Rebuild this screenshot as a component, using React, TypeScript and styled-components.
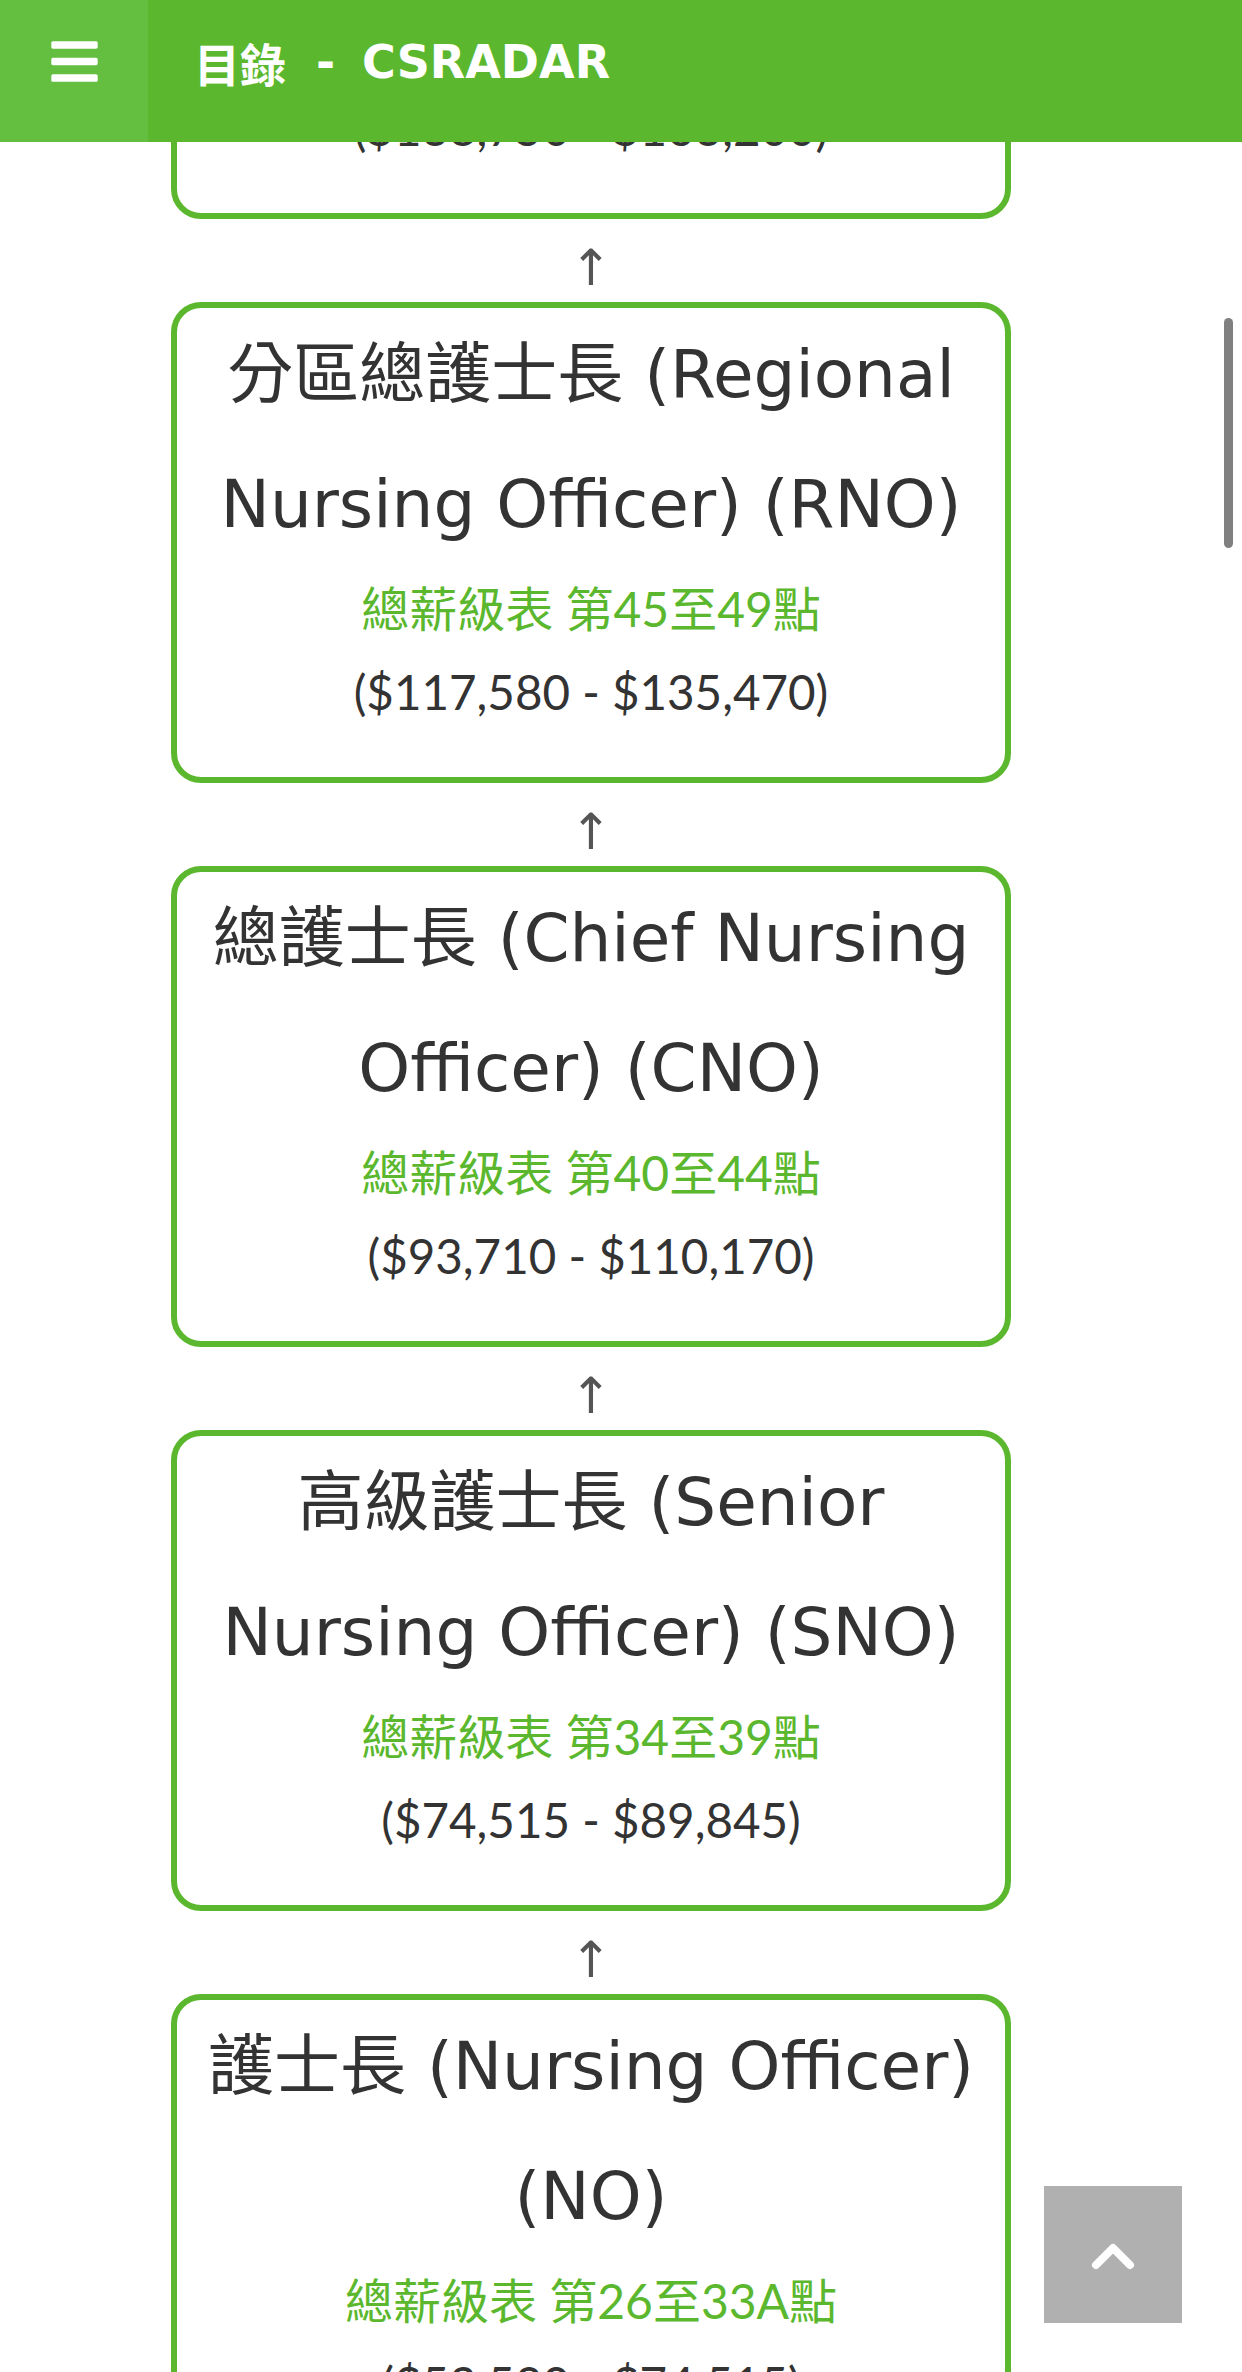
import React from "react";
import styled, { createGlobalStyle } from "styled-components";
import { FaBars } from "react-icons/fa";

const GREEN = "#5bb82e";

const GlobalStyle = createGlobalStyle`
  html, body {
    margin: 0;
    padding: 0;
    background: #ffffff;
  }
  body {
    font-family: "DejaVu Sans", "Noto Sans CJK TC", sans-serif;
    color: #333333;
  }
`;

const TopBar = styled.header`
  position: fixed;
  top: 0;
  left: 0;
  right: 0;
  height: 142px;
  display: flex;
  background: ${GREEN};
  z-index: 10;
`;

const MenuButton = styled.button`
  width: 148px;
  border: 0;
  padding: 0 0 20px;
  display: flex;
  align-items: center;
  justify-content: center;
  background: #64be3f;
  color: #ffffff;
`;

const BarTitle = styled.h1`
  margin: 0 0 0 46px;
  padding-bottom: 18px;
  display: flex;
  align-items: center;
  color: #ffffff;
  font-family: "DejaVu Sans", "Noto Sans CJK TC", sans-serif;
  font-size: 46px;
  font-weight: 700;
`;

const Dash = styled.span`
  margin: 0 27px 0 30px;
`;

const Page = styled.main`
  padding-right: 60px;
  display: flex;
  flex-direction: column;
  align-items: center;
  margin-top: -262px;
`;

const Card = styled.section`
  width: 840px;
  box-sizing: border-box;
  border: 6px solid ${GREEN};
  border-radius: 30px;
  padding: 2px 24px 49px;
  text-align: center;
`;

const RankTitle = styled.h2`
  margin: 0;
  font-family: "DejaVu Sans", "Noto Sans CJK TC", sans-serif;
  font-size: 66px;
  font-weight: 400;
  line-height: 130px;
  color: #333333;
`;

const Scale = styled.p`
  margin: 3px 0 0;
  font-family: Lato, "Noto Sans CJK TC", sans-serif;
  font-size: 48px;
  line-height: 72px;
  color: ${GREEN};
`;

const Salary = styled.p`
  margin: 11px 0 0;
  font-family: Lato, "Noto Sans CJK TC", sans-serif;
  font-size: 47.5px;
  line-height: 72px;
  color: #333333;
`;

const UpArrow = styled.div`
  height: 83px;
  display: flex;
  align-items: center;
  justify-content: center;
  padding-top: 14px;
  box-sizing: border-box;
  font-family: "DejaVu Sans", sans-serif;
  font-size: 50px;
  color: #555555;
`;

const ScrollThumb = styled.div`
  position: fixed;
  top: 318px;
  right: 9px;
  width: 9px;
  height: 230px;
  border-radius: 5px;
  background: #808080;
`;

const BackToTop = styled.a`
  position: fixed;
  right: 60px;
  bottom: 49px;
  width: 138px;
  height: 137px;
  display: flex;
  align-items: center;
  justify-content: center;
  background: #b0b0b0;
`;

type Rank = {
  title: string;
  scale: string;
  salary: string;
};

const ranks: Rank[] = [
  {
    title: "首席護士長 (Principal Nursing Officer) (PNO)",
    scale: "總薪級表 第50至53點",
    salary: "($138,750 - $163,200)",
  },
  {
    title: "分區總護士長 (Regional Nursing Officer) (RNO)",
    scale: "總薪級表 第45至49點",
    salary: "($117,580 - $135,470)",
  },
  {
    title: "總護士長 (Chief Nursing Officer) (CNO)",
    scale: "總薪級表 第40至44點",
    salary: "($93,710 - $110,170)",
  },
  {
    title: "高級護士長 (Senior Nursing Officer) (SNO)",
    scale: "總薪級表 第34至39點",
    salary: "($74,515 - $89,845)",
  },
  {
    title: "護士長 (Nursing Officer) (NO)",
    scale: "總薪級表 第26至33A點",
    salary: "($53,520 - $74,515)",
  },
];

export default function App() {
  return (
    <>
      <GlobalStyle />
      <TopBar>
        <MenuButton aria-label="menu">
          <FaBars size={53} />
        </MenuButton>
        <BarTitle>
          目錄<Dash>-</Dash>CSRADAR
        </BarTitle>
      </TopBar>

      <Page>
        {ranks.map((rank, i) => (
          <React.Fragment key={rank.title}>
            {i > 0 && <UpArrow>↑</UpArrow>}
            <Card>
              <RankTitle>{rank.title}</RankTitle>
              <Scale>{rank.scale}</Scale>
              <Salary>{rank.salary}</Salary>
            </Card>
          </React.Fragment>
        ))}
      </Page>

      <ScrollThumb />
      <BackToTop href="#top" aria-label="back to top">
        <svg width="44" height="30" viewBox="0 0 44 30">
          <polyline
            points="5,25 22,8 39,25"
            fill="none"
            stroke="#ffffff"
            strokeWidth="8"
            strokeLinecap="round"
            strokeLinejoin="round"
          />
        </svg>
      </BackToTop>
    </>
  );
}
